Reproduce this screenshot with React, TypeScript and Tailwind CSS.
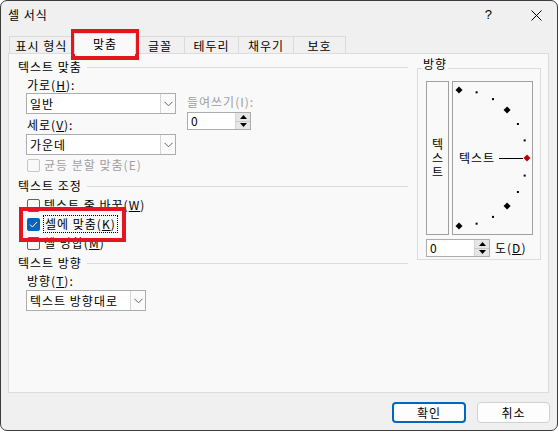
import React from "react";

function Chevron() {
  return (
    <svg width="9" height="6" viewBox="0 0 9 6">
      <polyline points="0.5,0.8 4.5,4.8 8.5,0.8" fill="none" stroke="#606060" strokeWidth="1" />
    </svg>
  );
}

function Select({ w, text }: { w: string; text: string }) {
  return (
    <div className={`flex h-[21px] border border-[#acacac] bg-white ${w}`}>
      <div className="flex-1 flex items-center pl-[3px] text-[12px] leading-[14px] text-black whitespace-nowrap">{text}</div>
      <div className="w-[15px] border-l border-[#d4d4d4] bg-[#fbfbfb] flex items-center justify-center">
        <Chevron />
      </div>
    </div>
  );
}

function Spinner({ w }: { w: string }) {
  return (
    <div className={`flex h-[18px] border border-[#acacac] bg-white ${w}`}>
      <div className="flex-1 flex items-center pl-[3px] text-[12px] leading-[14px] text-black">0</div>
      <div className="w-[15px] flex flex-col border-l border-[#d4d4d4] bg-[#e6e6e6]">
        <div className="flex-1 flex items-center justify-center border-b border-[#c8c8c8]">
          <svg width="7" height="4" viewBox="0 0 7 4">
            <polygon points="0,4 7,4 3.5,0" fill="#000" />
          </svg>
        </div>
        <div className="flex-1 flex items-center justify-center">
          <svg width="7" height="4" viewBox="0 0 7 4">
            <polygon points="0,0 7,0 3.5,4" fill="#000" />
          </svg>
        </div>
      </div>
    </div>
  );
}

function Checkbox({ checked, disabled }: { checked?: boolean; disabled?: boolean }) {
  if (checked) {
    return (
      <div className="w-[13px] h-[13px] rounded-[2px] bg-[#0067c0] flex items-center justify-center shrink-0">
        <svg width="9" height="7" viewBox="0 0 9 7">
          <polyline points="1,3.6 3.4,6 8,1" fill="none" stroke="#fff" strokeWidth="1" />
        </svg>
      </div>
    );
  }
  return (
    <div
      className={`w-[13px] h-[13px] rounded-[2px] border shrink-0 ${
        disabled ? "border-[#c6c6c6] bg-[#f9f9f9]" : "border-[#616161] bg-[#f9f9f9]"
      }`}
    />
  );
}

function Header({ text, mt }: { text: string; mt: string }) {
  return (
    <div className={`flex items-center h-[14px] ${mt}`}>
      <span className="text-[12px] leading-[14px] text-black whitespace-nowrap">{text}</span>
      <div className="flex-1 h-px bg-[#dcdcdc] ml-[5px]" />
    </div>
  );
}

function Dial() {
  const cx = 6;
  const cy = 76;
  const r = 68;
  const dots = [75, 60, 30, 15, -15, -30, -60, -75];
  const diamonds = [90, 45, -45, -90];
  const rad = (a: number) => (a * Math.PI) / 180;
  return (
    <svg width="79" height="152" viewBox="0 0 79 152">
      {dots.map((a) => (
        <rect
          key={a}
          x={cx + r * Math.cos(rad(a)) - 1}
          y={cy - r * Math.sin(rad(a)) - 1}
          width="2"
          height="2"
          fill="#000"
        />
      ))}
      {diamonds.map((a) => {
        const x = cx + r * Math.cos(rad(a));
        const y = cy - r * Math.sin(rad(a));
        return (
          <polygon
            key={a}
            points={`${x},${y - 3.5} ${x + 3.5},${y} ${x},${y + 3.5} ${x - 3.5},${y}`}
            fill="#000"
          />
        );
      })}
      <text
        x="6"
        y="80.5"
        fontSize="12"
        fontFamily="'Noto Sans CJK KR', sans-serif"
        fill="#000"
      >
        텍스트
      </text>
      <line x1="46" y1="76.5" x2="70" y2="76.5" stroke="#000" strokeWidth="1" />
      <polygon points="74,72.5 77.5,76 74,79.5 70.5,76" fill="#c00000" />
    </svg>
  );
}

export default function App() {
  const tabBase =
    "h-[18px] flex items-center justify-center border-t border-l border-r border-[#dadada] bg-[#f0f0f0] text-[12px] leading-[14px] text-black";
  return (
    <div className="w-[559px] h-[432px] bg-white tracking-[1px] font-['Noto_Sans_CJK_KR','Noto_Sans',sans-serif]">
      <div className="relative w-[558px] h-[431px] border border-[#3c3c3c] rounded-[7px] bg-[#f0f0f0] overflow-hidden flex flex-col">
        {/* Title bar */}
        <div className="h-[28px] flex items-center justify-between pl-[7px] pr-[15px] shrink-0">
          <span className="text-[12px] leading-[14px] text-black">셀 서식</span>
          <div className="flex items-center gap-[38px]">
            <span className="text-[13px] leading-[14px] text-black font-['Liberation_Sans',sans-serif]">?</span>
            <svg width="11" height="11" viewBox="0 0 11 11">
              <path d="M0.5 0.5 L10.5 10.5 M10.5 0.5 L0.5 10.5" stroke="#000" strokeWidth="1" />
            </svg>
          </div>
        </div>

        {/* Tabs */}
        <div className="h-[25px] -mb-[1px] flex items-end pl-[8px] shrink-0">
          <div className={`${tabBase} w-[65px]`}>표시 형식</div>
          <div className="relative z-10 h-[21px] w-[62px] flex items-center justify-center border-t border-l border-r border-[#dadada] bg-[#f9f9f9] text-[12px] leading-[14px] text-black">
            맞춤
          </div>
          <div className={`${tabBase} w-[49px] border-l-0`}>글꼴</div>
          <div className={`${tabBase} w-[54px] border-l-0`}>테두리</div>
          <div className={`${tabBase} w-[55px] border-l-0`}>채우기</div>
          <div className={`${tabBase} w-[52px] border-l-0`}>보호</div>
        </div>

        {/* Panel */}
        <div className="ml-[7px] w-[541px] h-[340px] border border-[#dcdcdc] bg-[#f9f9f9] flex shrink-0">
          {/* Left column */}
          <div className="w-[399px] pl-[9px] pt-[6px] flex flex-col">
            <Header text="텍스트 맞춤" mt="" />
            <div className="flex pl-[8px]">
              <div className="flex flex-col w-[150px]">
                <div className="mt-[4px] h-[14px] pl-[1px] text-[12px] leading-[14px]">
                  가로(<u>H</u>):
                </div>
                <div className="mt-[1px]">
                  <Select w="w-[150px]" text="일반" />
                </div>
                <div className="mt-[4px] h-[14px] pl-[1px] text-[12px] leading-[14px]">
                  세로(<u>V</u>):
                </div>
                <div className="mt-[2px]">
                  <Select w="w-[150px]" text="가운데" />
                </div>
              </div>
              <div className="flex flex-col ml-[11px]">
                <div className="mt-[21px] h-[14px] text-[12px] leading-[14px] text-[#a0a0a0] whitespace-nowrap">
                  들여쓰기(I):
                </div>
                <div className="mt-[3px]">
                  <Spinner w="w-[64px]" />
                </div>
              </div>
            </div>
            <div className="pl-[9px] mt-[3px] h-[14px] flex items-center gap-[4px]">
              <Checkbox disabled />
              <span className="text-[12px] leading-[14px] text-[#a0a0a0]">균등 분할 맞춤(E)</span>
            </div>
            <Header text="텍스트 조정" mt="mt-[7px]" />
            <div className="pl-[9px] mt-[5px] h-[14px] flex items-center gap-[4px]">
              <Checkbox />
              <span className="text-[12px] leading-[14px] text-black">
                텍스트 줄 바꿈(<u>W</u>)
              </span>
            </div>
            <div className="pl-[9px] mt-[5px] h-[14px] flex items-center gap-[3px]">
              <Checkbox checked />
              <span className="text-[12px] leading-[16px] text-black border border-dotted border-black px-[1px]">
                셀에 맞춤(<u>K</u>)
              </span>
            </div>
            <div className="pl-[9px] mt-[5px] h-[14px] flex items-center gap-[4px]">
              <Checkbox />
              <span className="text-[12px] leading-[14px] text-black">
                셀 병합(<u>M</u>)
              </span>
            </div>
            <Header text="텍스트 방향" mt="mt-[6px]" />
            <div className="pl-[8px] flex flex-col">
              <div className="mt-[4px] h-[14px] pl-[1px] text-[12px] leading-[14px]">
                방향(<u>T</u>):
              </div>
              <div className="mt-[2px]">
                <Select w="w-[120px]" text="텍스트 방향대로" />
              </div>
            </div>
          </div>

          {/* Right group */}
          <div className="relative ml-[9px] mt-[14px] w-[124px] h-[192px] border border-[#dcdcdc] pl-[8px] pt-[12px]">
            <span className="absolute left-[4px] -top-[12px] px-[1px] bg-[#f9f9f9] text-[12px] leading-[14px] text-black">
              방향
            </span>
            <div className="flex gap-[3px]">
              <div className="w-[23px] h-[154px] border border-[#a0a0a0] bg-[#f9f9f9] flex flex-col items-center justify-center text-[12px] leading-[14px] tracking-normal text-black">
                <span>텍</span>
                <span>스</span>
                <span>트</span>
              </div>
              <div className="w-[81px] h-[154px] border border-[#a0a0a0] bg-[#f9f9f9]">
                <Dial />
              </div>
            </div>
            <div className="mt-[4px] flex items-center">
              <Spinner w="w-[64px]" />
              <span className="ml-[5px] text-[12px] leading-[14px] text-black">
                도(<u>D</u>)
              </span>
            </div>
          </div>
        </div>

        {/* Buttons */}
        <div className="mt-[9px] flex justify-end gap-[11px] pr-[7px]">
          <div className="w-[74px] h-[21px] rounded-[4px] border-2 border-[#0067c0] bg-[#fdfdfd] flex items-center justify-center text-[12px] leading-[14px] text-black">
            확인
          </div>
          <div className="w-[73px] h-[21px] rounded-[4px] border border-[#d0d0d0] bg-[#fdfdfd] flex items-center justify-center text-[12px] leading-[14px] text-black">
            취소
          </div>
        </div>

        {/* Red highlight boxes */}
        <div className="absolute left-[70px] top-[28px] w-[68px] h-[31px] border-[4px] border-[#e3151e]" />
        <div className="absolute left-[18px] top-[206px] w-[107px] h-[35px] border-[4px] border-[#e3151e]" />
      </div>
    </div>
  );
}
